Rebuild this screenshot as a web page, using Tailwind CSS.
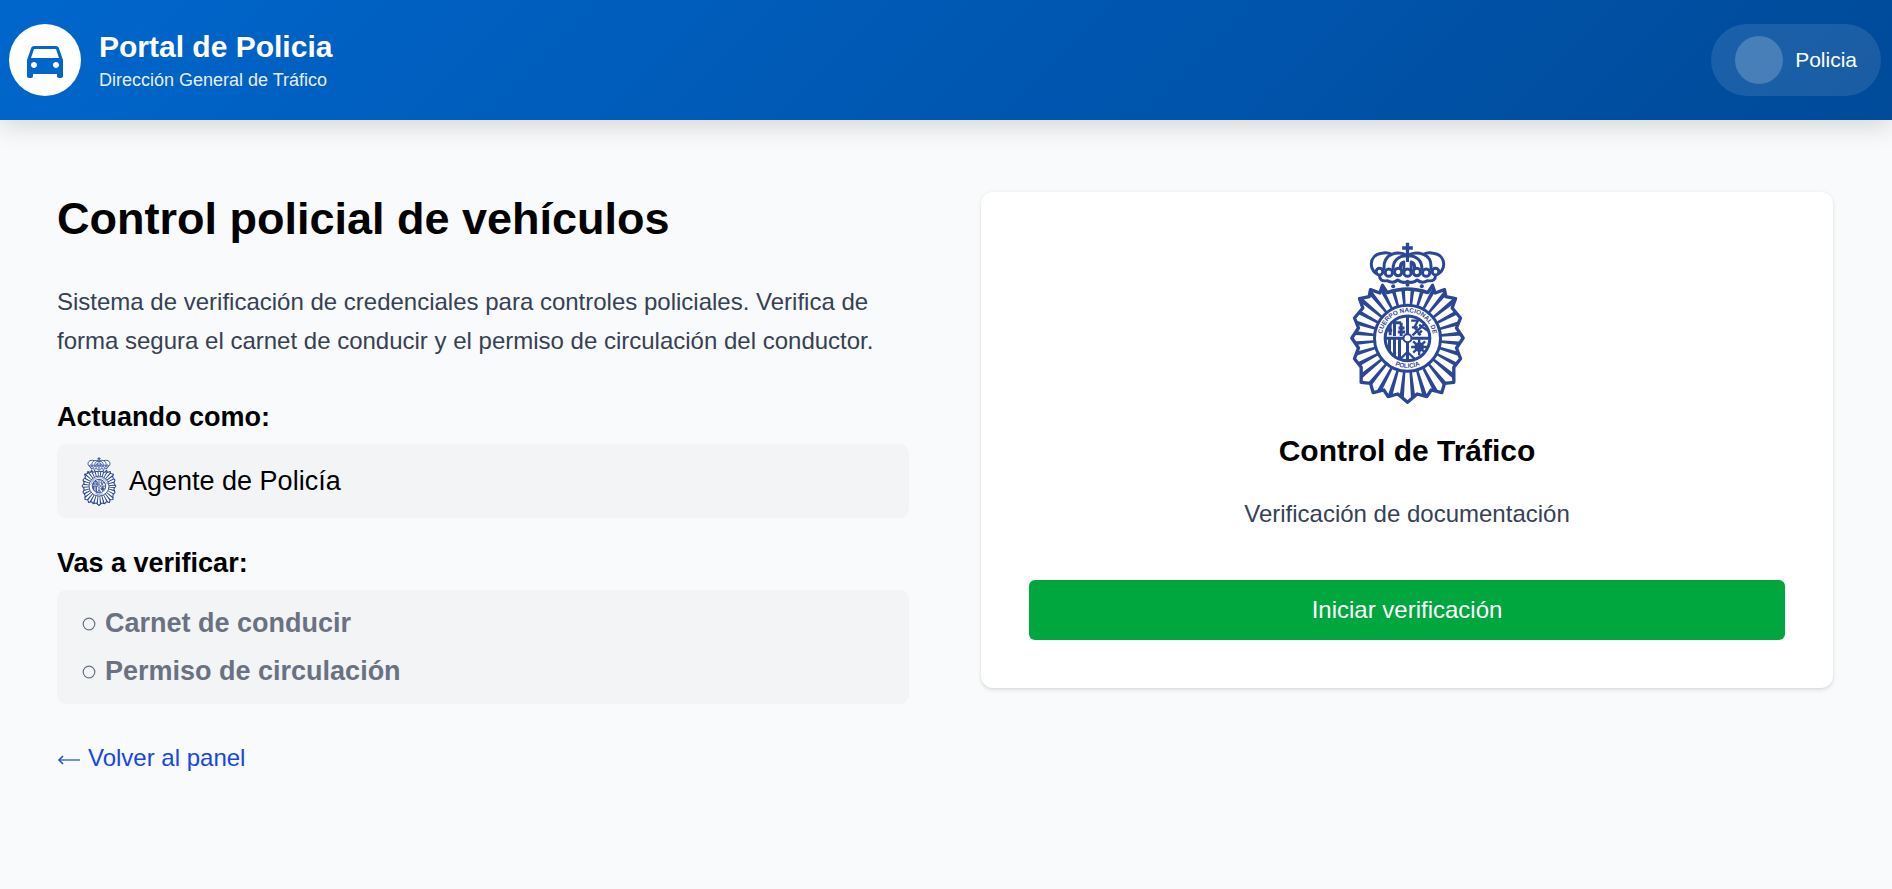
<!DOCTYPE html>
<html lang="es">
<head>
<meta charset="utf-8">
<title>Portal de Policia</title>
<script src="https://cdn.jsdelivr.net/npm/@tailwindcss/browser@4"></script>
</head>
<body class="min-h-screen bg-[#f9fafc] font-['Liberation_Sans',Arial,sans-serif] text-black">
<svg class="absolute size-0" xmlns="http://www.w3.org/2000/svg">
  <defs>
    <clipPath id="star"><path d="M126 150 L118 173 L90 163 L86 184 L57 190 L67 218 L42 248 L54 278 L34 308 L54 338 L42 370 L62 396 L62 441 L90 444 L98 472 L130 464 L143 484 L172 476 L201 501 L230 476 L259 484 L272 464 L304 472 L312 444 L340 441 L340 396 L360 370 L348 338 L368 308 L348 278 L360 248 L335 218 L345 190 L316 184 L312 163 L284 173 L276 150 L262 172 Q201 150 140 172 Z"/></clipPath>
    <clipPath id="disc"><circle cx="201" cy="309" r="66"/></clipPath>
    <symbol id="emblem" viewBox="29 20 344 486">
      <g fill="none" stroke="#2a4796" stroke-width="9" stroke-linejoin="round">
        <path fill="#fff" stroke-width="10" d="M126 150 L118 173 L90 163 L86 184 L57 190 L67 218 L42 248 L54 278 L34 308 L54 338 L42 370 L62 396 L62 441 L90 444 L98 472 L130 464 L143 484 L172 476 L201 501 L230 476 L259 484 L272 464 L304 472 L312 444 L340 441 L340 396 L360 370 L348 338 L368 308 L348 278 L360 248 L335 218 L345 190 L316 184 L312 163 L284 173 L276 150 L262 172 Q201 150 140 172 Z"/>
        <g clip-path="url(#star)"><circle cx="201" cy="309" r="150" stroke-width="104" pathLength="360" stroke-dasharray="4.25 7" stroke-dashoffset="-3.500"/></g>
        <circle cx="201" cy="309" r="99" fill="#fff" stroke-width="9"/>
        <circle cx="201" cy="309" r="67" fill="#fff"/>
        <g clip-path="url(#disc)">
          <path stroke-width="9" d="M201 240V380M133 309H270M147 309V370M162 309V378M177 309V380M149 250V300M162 262H182M162 248V302M182 262V302M141 285H155M174 278H192M172 290H194"/>
          <path stroke-width="7" d="M212 256H232L222 276L240 300M216 300L256 262M214 276H232M236 268L262 286M244 286L232 298"/>
          <path stroke-width="7" d="M212 335H262M236 312V360M218 318L254 352M254 318L218 352M178 372L201 350L224 372"/>
          <circle cx="236" cy="335" r="12" stroke-width="5"/>
        </g>
        <circle cx="201" cy="309" r="12" fill="#fff" stroke-width="6"/>
        <path fill="#fff" d="M117 118 C84 112 82 58 124 54 Q138 50 154 57 Q178 48 201 61 Q224 48 248 57 Q264 50 278 54 C320 58 318 112 285 118 Q286 140 262 136 Q244 146 230 134 Q216 146 201 138 Q186 146 172 134 Q158 146 140 136 Q116 140 117 118 Z"/>
        <path d="M131 104 C128 80 138 62 154 57 M271 104 C274 78 264 62 248 57 M158 104 C156 78 172 60 201 61 C230 60 246 78 244 104 M180 106 V92 Q181 82 190 80 V106 M222 106 V92 Q221 82 212 80 V106 M201 61 V80"/>
        <g fill="#fff" stroke-width="9"><circle cx="117" cy="109" r="10"/><circle cx="145" cy="112" r="11"/><circle cx="173" cy="110" r="11"/><circle cx="201" cy="112" r="11"/><circle cx="229" cy="110" r="11"/><circle cx="257" cy="112" r="11"/><circle cx="285" cy="109" r="10"/></g>
        <path stroke-width="10" d="M201 22V58M185 38H217"/>
      </g>
      <g fill="#2a4796"><circle cx="158" cy="153" r="6"/><circle cx="201" cy="148" r="6"/><circle cx="244" cy="153" r="6"/></g>
      <path id="arcTop" fill="none" d="M127.600 331 A77 77 0 1 1 274.400 331"/>
      <path id="arcBottom" fill="none" d="M133 366 A89 89 0 0 0 269 366"/>
      <g fill="#2a4796" font-family="Liberation Sans, Arial, sans-serif" font-weight="700" font-size="19" text-anchor="middle">
        <text><textPath href="#arcTop" startOffset="50%">CUERPO NACIONAL DE</textPath></text>
        <text><textPath href="#arcBottom" startOffset="50%">POLICÍA</textPath></text>
      </g>
    </symbol>
  </defs>
</svg>

<header class="h-[120px] bg-[linear-gradient(135deg,#0066cc_0%,#004a99_100%)] shadow-[0_6px_24px_rgba(0,0,0,0.15)] text-white">
  <div class="flex h-full items-center justify-between pl-[9px] pr-[11px]">
    <div class="flex items-center gap-[18px]">
      <div class="flex size-[72px] items-center justify-center rounded-full bg-white">
        <svg class="size-12" viewBox="0 0 24 24" fill="#0066cc"><path d="M18.920 6.010C18.720 5.420 18.160 5 17.500 5h-11c-.66 0-1.210.42-1.420 1.010L3 12v8c0 .55.450 1 1 1h1c.55 0 1-.45 1-1v-1h12v1c0 .55.450 1 1 1h1c.55 0 1-.45 1-1v-8l-2.080-5.990zM6.500 16c-.83 0-1.500-.67-1.500-1.500S5.670 13 6.500 13s1.500.67 1.500 1.500S7.330 16 6.500 16zm11 0c-.83 0-1.500-.67-1.500-1.500s.67-1.500 1.500-1.500 1.500.67 1.500 1.500-.67 1.500-1.500 1.500zM5 11l1.500-4.500h11L19 11H5z"/></svg>
      </div>
      <div class="pt-[2px]">
        <div class="text-[30px] font-bold leading-[38px]">Portal de Policia</div>
        <div class="text-[18px] leading-[28px] opacity-90">Dirección General de Tráfico</div>
      </div>
    </div>
    <div class="flex h-[72px] items-center gap-3 rounded-full bg-white/10 px-6">
      <div class="size-12 rounded-full bg-white/20"></div>
      <div class="text-[21px]">Policia</div>
    </div>
  </div>
</header>

<main class="ml-[57px] mr-[59px] mt-[72px] grid grid-cols-2 items-start gap-[72px]">
  <section>
    <h1 class="text-[45px] font-bold leading-[54px]">Control policial de vehículos</h1>
    <p class="mt-9 text-2xl leading-[39px] text-[#364153]">Sistema de verificación de credenciales para controles policiales. Verifica de<br>forma segura el carnet de conducir y el permiso de circulación del conductor.</p>
    <h2 class="mt-9 text-[27px] font-bold leading-[42px]">Actuando como:</h2>
    <div class="mt-[6px] flex h-[74px] items-center rounded-[9px] bg-gray-100 pl-6">
      <svg class="h-[49px] w-9"><use href="#emblem"/></svg>
      <span class="ml-3 text-[27px]">Agente de Policía</span>
    </div>
    <h2 class="mt-6 text-[27px] font-bold leading-[42px]">Vas a verificar:</h2>
    <ul class="mt-[6px] h-[114px] rounded-[9px] bg-gray-100 px-6 pt-3 text-[27px] font-bold leading-[42px] text-[#6a7282]">
      <li class="flex items-center gap-[9px]"><svg class="ml-px mt-[2px] size-[14px]" viewBox="0 0 14 14"><circle cx="7" cy="7" r="5.800" fill="none" stroke="currentColor" stroke-width="1.200"/></svg>Carnet de conducir</li>
      <li class="mt-[6px] flex items-center gap-[9px]"><svg class="ml-px mt-[2px] size-[14px]" viewBox="0 0 14 14"><circle cx="7" cy="7" r="5.800" fill="none" stroke="currentColor" stroke-width="1.200"/></svg>Permiso de circulación</li>
    </ul>
    <a class="mt-9 flex items-center text-2xl leading-9 text-[#1447e6]"><svg class="mr-[7px] mt-[3px] h-3 w-6" viewBox="0 0 24 12" fill="none" stroke="currentColor"><path d="M3 6H23" stroke-width="1.200"/><path d="M6 2L2 6L6 10" stroke-width="1.500"/></svg>Volver al panel</a>
  </section>
  <section class="h-[496px] rounded-xl bg-white px-12 pt-12 text-center shadow-[0_1.5px_4.500px_rgba(0,0,0,0.1),0_1.5px_3px_-1.500px_rgba(0,0,0,0.1)]">
    <svg class="mx-auto mt-[2px] h-[162px] w-[115px]"><use href="#emblem"/></svg>
    <h2 class="mt-[26px] text-[30px] font-bold leading-[42px]">Control de Tráfico</h2>
    <p class="mt-6 text-2xl leading-9 text-[#364153]">Verificación de documentación</p>
    <button class="mt-12 h-[60px] w-full rounded-md bg-[#00a63e] text-2xl text-white">Iniciar verificación</button>
  </section>
</main>
</body>
</html>
